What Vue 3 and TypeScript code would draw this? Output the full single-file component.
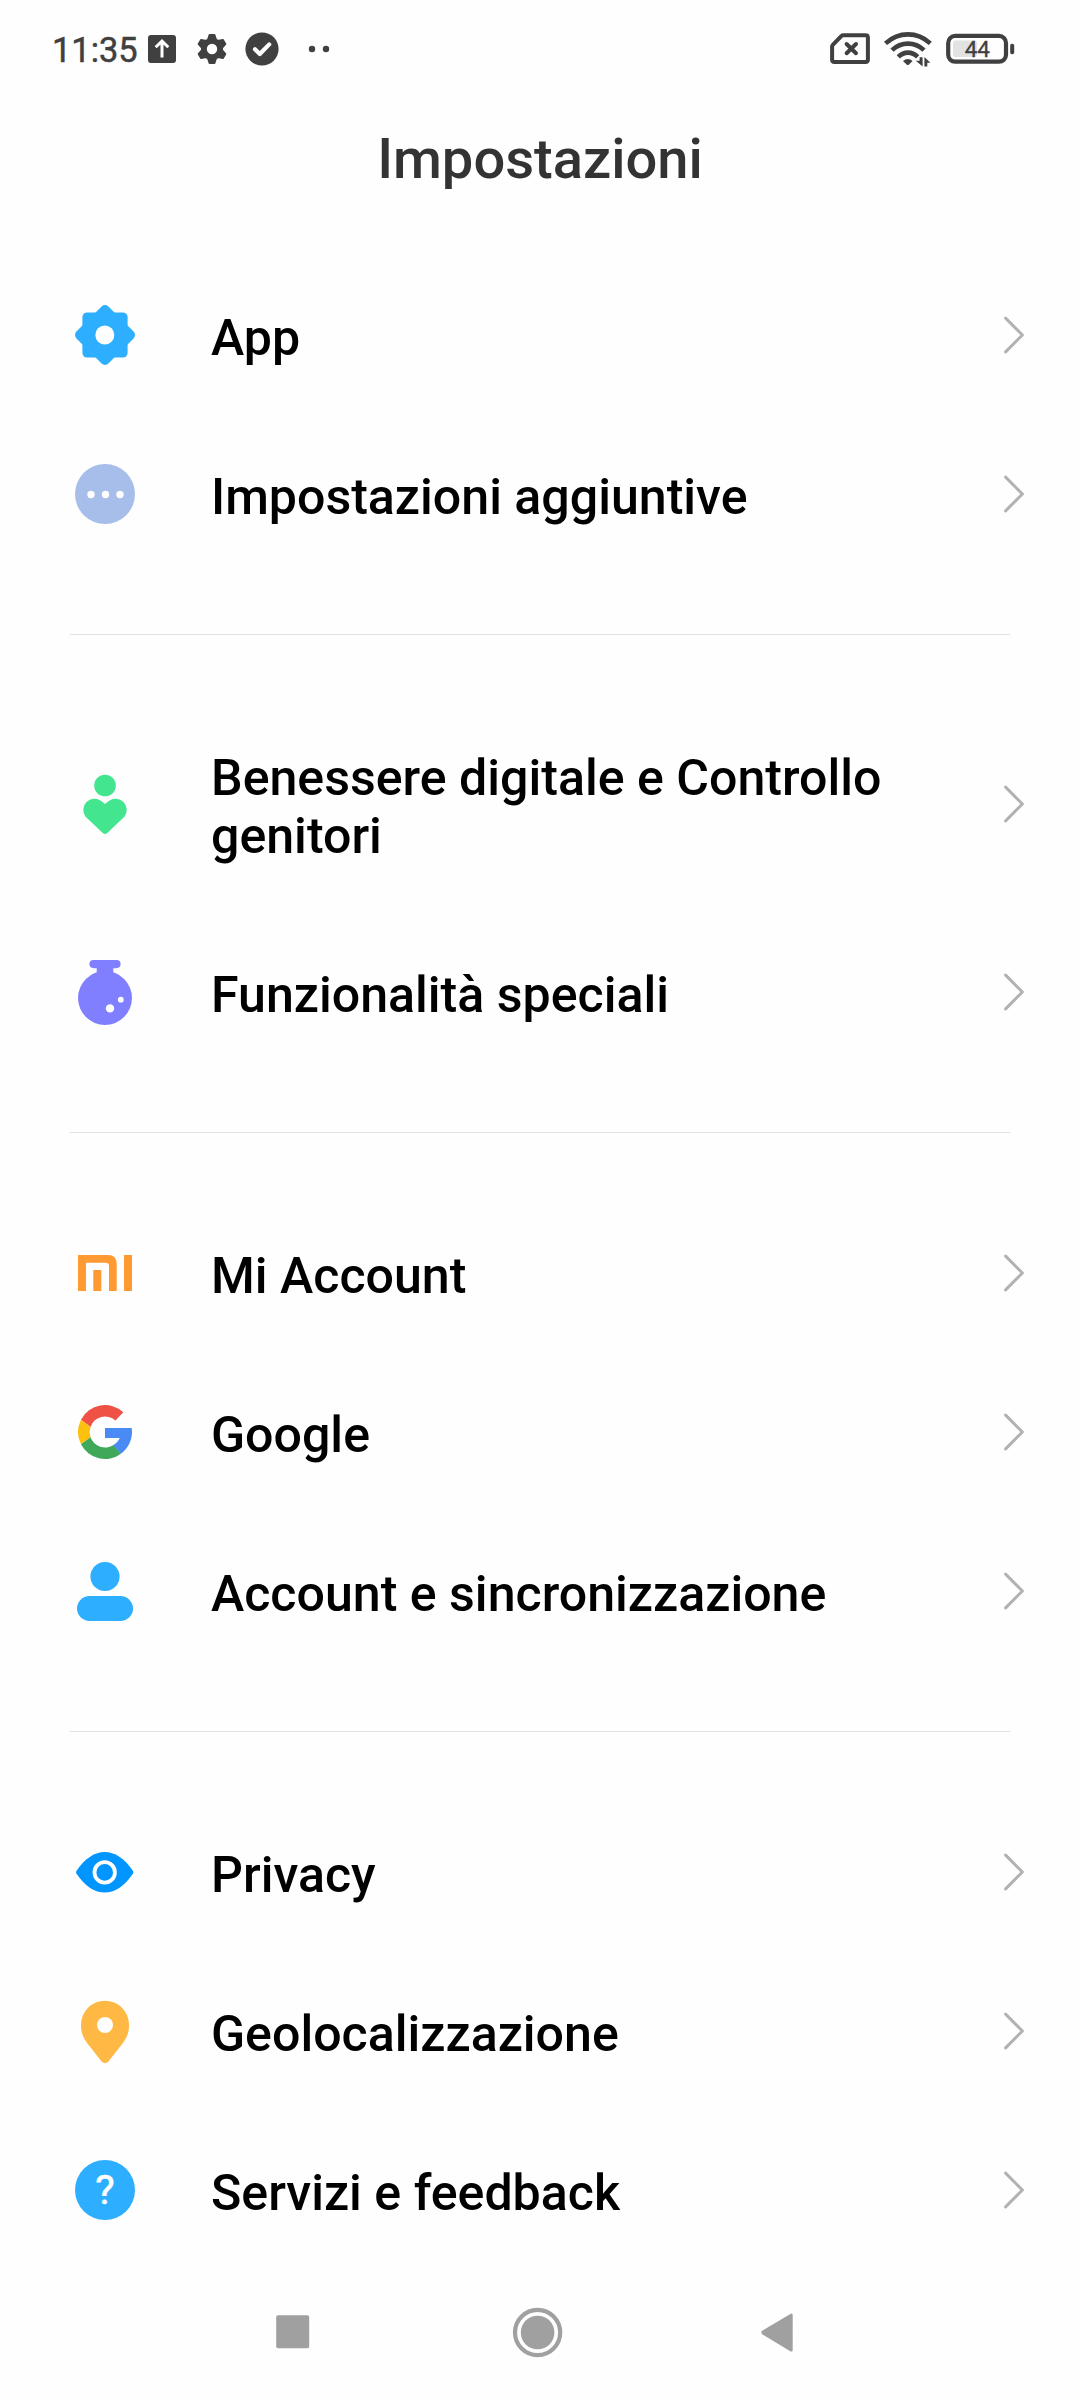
<script setup lang="ts">
type IconName =
  | 'apps' | 'more' | 'wellbeing' | 'flask' | 'mi'
  | 'google' | 'account' | 'eye' | 'pin' | 'help'

interface SettingsItem {
  icon: IconName
  label: string
}

const groups: SettingsItem[][] = [
  [
    { icon: 'apps', label: 'App' },
    { icon: 'more', label: 'Impostazioni aggiuntive' },
  ],
  [
    { icon: 'wellbeing', label: 'Benessere digitale e Controllo genitori' },
    { icon: 'flask', label: 'Funzionalità speciali' },
  ],
  [
    { icon: 'mi', label: 'Mi Account' },
    { icon: 'google', label: 'Google' },
    { icon: 'account', label: 'Account e sincronizzazione' },
  ],
  [
    { icon: 'eye', label: 'Privacy' },
    { icon: 'pin', label: 'Geolocalizzazione' },
    { icon: 'help', label: 'Servizi e feedback' },
  ],
]

const gearTeeth = [0, 60, 120, 180, 240, 300]
</script>

<template>
  <div class="screen">
    <header class="status">
      <span class="time">11:35</span>
      <svg class="s-upload" width="28" height="28" viewBox="0 0 28 28">
        <rect width="28" height="28" rx="3" fill="#404040" />
        <path d="M14 22.5V6.5M7.7 12.3L14 6L20.3 12.3" fill="none" stroke="#fefefe" stroke-width="3" />
      </svg>
      <svg class="s-gear" width="30" height="30" viewBox="-15 -15 30 30">
        <circle r="11" fill="#404040" />
        <path
          v-for="a in gearTeeth"
          :key="a"
          d="M-5.4 -8L-3.4 -14.2Q-3.2 -15 -2.4 -15H2.4Q3.2 -15 3.4 -14.2L5.4 -8Z"
          fill="#404040"
          :transform="`rotate(${a})`"
        />
        <circle r="5.2" fill="#fefefe" />
      </svg>
      <svg class="s-check" width="34" height="34" viewBox="-17 -17 34 34">
        <circle r="16.6" fill="#404040" />
        <path d="M-7 .3L-2.2 5L7.2 -4.6" fill="none" stroke="#fefefe" stroke-width="4.2" stroke-linecap="round" stroke-linejoin="round" />
      </svg>
      <svg class="s-dots" width="22" height="8" viewBox="0 0 22 8">
        <circle cx="4" cy="4" r="3.2" fill="#404040" />
        <circle cx="18" cy="4" r="3.2" fill="#404040" />
      </svg>
      <div class="status-right">
        <svg width="40" height="32" viewBox="0 0 40 32">
          <path d="M13.2 2.2H35.5Q37.9 2.2 37.9 4.6V26.6Q37.9 29 35.5 29H4.5Q2.1 29 2.1 26.6V13.6Q2.1 12.6 2.8 11.9L11.5 3Q12.2 2.2 13.2 2.2Z" fill="none" stroke="#404040" stroke-width="4" />
          <path d="M16.6 11L26 20.2M26 11L16.6 20.2" fill="none" stroke="#404040" stroke-width="4" stroke-linecap="round" />
        </svg>
        <svg class="s-wifi" width="48" height="34" viewBox="0 0 48 34">
          <g fill="none" stroke="#404040" stroke-width="4.6">
            <path d="M1.5 11.4Q11.5 2.4 24 2.4T46.3 11.4" />
            <path d="M8 18.2Q15 11.6 24 11.6T40 18.2" />
            <path d="M14.3 24.8Q18.6 20.6 24 20.6T33.7 24.8" />
          </g>
          <path d="M19 29Q23.8 25 28.6 29L25 32.6Q23.8 33.6 22.6 32.6Z" fill="#404040" />
          <path d="M35.6 25.2H38.6V34.4L31.8 28.8H35.6ZM40.4 34.4V25L46.4 30.8H43.3V34.4Z" fill="#404040" />
        </svg>
        <svg class="s-battery" width="70" height="32" viewBox="0 0 70 32">
          <rect x="2.2" y="2.9" width="57.8" height="25.8" rx="7" fill="none" stroke="#404040" stroke-width="4.2" />
          <rect x="7" y="7.6" width="24" height="16.4" rx="2.5" fill="#e2e2e2" />
          <rect x="64.2" y="10.8" width="4" height="10.4" rx="1.8" fill="#404040" />
          <text class="level" x="31.3" y="24.2" text-anchor="middle">44</text>
        </svg>
      </div>
    </header>

    <h1 class="title">Impostazioni</h1>

    <main class="list">
      <section v-for="(group, gi) in groups" :key="gi" class="group">
        <div v-for="item in group" :key="item.icon" class="row">
          <svg class="icon" width="60" height="58" viewBox="-30 -29 60 58">
            <g v-if="item.icon === 'apps'" fill="#2eaeff">
              <rect x="-22.6" y="-22.6" width="45.2" height="45.2" rx="4.8" />
              <rect x="-22.6" y="-22.6" width="45.2" height="45.2" rx="4.8" transform="rotate(45)" />
              <circle cx="-.2" r="9.5" fill="#fefefe" />
            </g>
            <g v-else-if="item.icon === 'more'" fill="#fefefe">
              <circle r="30" fill="#a7beea" />
              <circle cx="-14" cy=".5" r="3.7" />
              <circle cx=".5" cy=".5" r="3.7" />
              <circle cx="15" cy=".5" r="3.7" />
            </g>
            <g v-else-if="item.icon === 'wellbeing'" fill="#44e58f">
              <circle cy="-18.5" r="10.8" />
              <path d="M0 0L-3.8 -3A11.2 11.2 0 0 0 -19.4 12.8L-2 29.2Q0 30.8 2 29.2L19.4 12.8A11.2 11.2 0 0 0 3.8 -3Z" />
            </g>
            <g v-else-if="item.icon === 'flask'" fill="#807fff">
              <rect x="-15.6" y="-32" width="31.2" height="8.2" rx="4.1" />
              <rect x="-8.3" y="-26" width="16.6" height="12" />
              <circle cy="6" r="27" />
              <circle cx="5" cy="16.4" r="4.2" fill="#fefefe" />
              <circle cx="15.8" cy="7.7" r="2.9" fill="#fefefe" />
            </g>
            <g v-else-if="item.icon === 'mi'" fill="#ff9a33">
              <path d="M-27 -18H3Q11.7 -18 11.7 -9V18H4V-7Q4 -10.3 .7 -10.3H-19V18H-27Z" />
              <rect x="-11.7" y="-3" width="8" height="21" />
              <rect x="19" y="-18" width="8" height="36" />
            </g>
            <g v-else-if="item.icon === 'google'">
              <path d="M18.3 -19.8A27 27 0 0 0 -24 -12.3L-14.5 -5.1A15.4 15.4 0 0 1 10.4 -11.6Z" fill="#ef5145" />
              <path d="M-24 -12.3A27 27 0 0 0 -24 12.2L-14.5 5.2A15.4 15.4 0 0 1 -14.5 -5.1Z" fill="#fcc10f" />
              <path d="M-24 12.2A27 27 0 0 0 16 21.7L8.6 13A15.4 15.4 0 0 1 -14.5 5.2Z" fill="#3fa959" />
              <path d="M0 -4H26.7A27 27 0 0 1 16 21.7L8 13.2Q13 10.5 14.7 6H0Z" fill="#4a8af5" />
            </g>
            <g v-else-if="item.icon === 'account'" fill="#2eaeff">
              <circle cy="-14.5" r="14.6" />
              <rect x="-28" y="5" width="56" height="25" rx="12.5" />
            </g>
            <g v-else-if="item.icon === 'eye'">
              <path d="M-28.6 -.9C-20 -14 -10 -20 -.3 -20S19.4 -14 28 -.9Q28.7 .3 28 1.5C19.4 14.6 9.4 20.6 -.3 20.6S-20 14.6 -28.6 1.5Q-29.3 .3 -28.6 -.9Z" fill="#0095ff" />
              <circle cx="-.3" cy=".4" r="10.2" fill="none" stroke="#fefefe" stroke-width="3.8" />
            </g>
            <g v-else-if="item.icon === 'pin'">
              <path d="M0 -30.3A24 24 0 0 0 -24 -6.3C-24 1.5 -22.4 5.5 -18.5 11.2L-3.4 30.4Q0 33.6 3.4 30.4L18.5 11.2C22.4 5.5 24 1.5 24 -6.3A24 24 0 0 0 0 -30.3Z" fill="#ffb843" />
              <circle cy="-6" r="8" fill="#fefefe" />
            </g>
            <g v-else>
              <circle r="30" fill="#2eaeff" />
              <text class="question" y="14" text-anchor="middle">?</text>
            </g>
          </svg>
          <span class="label">{{ item.label }}</span>
          <svg class="chevron" width="22" height="40" viewBox="0 0 22 40">
            <path d="M1.6 3.1L18.4 20L1.6 36.9" fill="none" stroke="#b2b2b2" stroke-width="3" stroke-linecap="round" stroke-linejoin="round" />
          </svg>
        </div>
      </section>
    </main>

    <nav class="nav">
      <svg width="34" height="40" viewBox="0 0 34 40">
        <rect x=".2" y="3.3" width="33" height="33" rx="1.8" fill="#a0a0a0" />
      </svg>
      <svg class="home" width="52" height="52" viewBox="-26 -26 52 52">
        <circle r="22.6" cx="-.4" cy=".5" fill="none" stroke="#a0a0a0" stroke-width="4.2" />
        <circle r="16.8" cx="-.4" cy=".5" fill="#a0a0a0" />
      </svg>
      <svg width="34" height="40" viewBox="0 0 34 40">
        <path d="M2.8 19.9L31.4 2.9V38.3L2.8 21.1Z" fill="#a0a0a0" stroke="#a0a0a0" stroke-width="2.6" stroke-linejoin="round" />
      </svg>
    </nav>
  </div>
</template>

<style>
body {
  background: #fefefe;
}
</style>

<style scoped>
.screen {
  box-sizing: border-box;
  width: 1080px;
  height: 2400px;
  overflow: hidden;
  display: flex;
  flex-direction: column;
  background: #fefefe;
  color: #000;
  font-family: Roboto, "Noto Sans", sans-serif;
}

svg {
  display: block;
  flex: none;
  overflow: visible;
}

.status {
  display: flex;
  align-items: center;
  height: 98px;
  padding: 0 64px 0 52px;
}

.time {
  width: 96px;
  font-size: 34.4px;
  line-height: 40px;
  padding-top: 2px;
  color: #404040;
  -webkit-text-stroke: 0.5px #404040;
  white-space: nowrap;
}

.s-gear { margin-left: 21px; }
.s-check { margin-left: 18px; }
.s-dots { margin-left: 29px; }

.status-right {
  display: flex;
  align-items: center;
  margin-left: auto;
}

.s-wifi { margin-left: 14px; }
.s-battery { margin-left: 14px; }

.level {
  font-size: 22.5px;
  fill: #404040;
  stroke: #404040;
  stroke-width: 0.3px;
}

.question {
  font-size: 41px;
  fill: #fefefe;
  stroke: #fefefe;
  stroke-width: 0.6px;
}

.title {
  margin: 28px 0 63px;
  font-size: 56.1px;
  line-height: 66px;
  font-weight: 500;
  text-align: center;
  color: #333;
}

.list {
  display: flex;
  flex-direction: column;
}

.group + .group {
  margin-top: 61px;
  padding-top: 61px;
  position: relative;
}

.group + .group::before {
  content: "";
  position: absolute;
  top: 0;
  left: 70px;
  right: 70px;
  height: 1px;
  background: #e2e2e2;
}

.row {
  display: flex;
  align-items: center;
  padding: 48px 54px 47px 75px;
}

.label {
  width: 700px;
  margin-left: 76px;
  padding-top: 6px;
  font-size: 50.1px;
  line-height: 58px;
  font-weight: 500;
}

.chevron {
  margin-left: auto;
}

.nav {
  display: flex;
  align-items: center;
  justify-content: space-between;
  width: 518px;
  height: 52px;
  margin: auto 0 42px 276px;
}

.home {
  margin-left: 6px;
}
</style>
